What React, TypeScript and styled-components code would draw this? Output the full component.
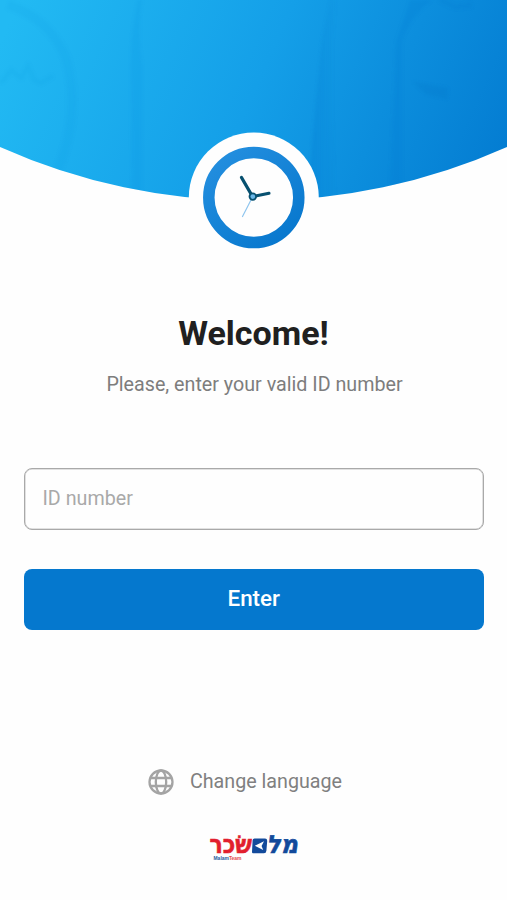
import React from "react";
import styled, { createGlobalStyle } from "styled-components";

const GlobalStyle = createGlobalStyle`
  * { box-sizing: border-box; }
  body { margin: 0; background: #fefefe; font-family: Roboto, "Liberation Sans", sans-serif; }
`;

const Screen = styled.main`
  width: 100%;
  height: 900px;
  display: flex;
  flex-direction: column;
  overflow: hidden;
  background: #fefefe;
`;

const Hero = styled.svg`
  display: block;
  width: 100%;
  height: 260px;
  flex: none;
`;

const Intro = styled.header`
  display: flex;
  flex-direction: column;
  align-items: center;
  padding-top: 53px;
`;

const Title = styled.h1`
  margin: 0;
  font-size: 34px;
  line-height: 40px;
  font-weight: 700;
  color: #202020;
`;

const Subtitle = styled.p`
  margin: 20px 0 0;
  padding-left: 2px;
  font-size: 19.7px;
  line-height: 24px;
  color: #7d7d7d;
`;

const Form = styled.form`
  display: flex;
  flex-direction: column;
  gap: 39px;
  padding: 70.5px 23px 0 23.5px;
`;

const Field = styled.input`
  height: 62px;
  border: 1px solid #a9a9a9;
  border-radius: 8px;
  padding: 0 18px 1px;
  background: #fefefe;
  box-shadow: inset 0 0 0 0.5px #c4c4c4;
  font: 400 19.7px Roboto, sans-serif;
  color: #333;
  outline: none;
  &::placeholder { color: #a9a9a9; opacity: 1; }
`;

const Submit = styled.button`
  height: 61px;
  border: 0;
  border-radius: 8px;
  padding: 0 0 2px;
  background: #0578ce;
  color: #fff;
  font: 500 22.4px Roboto, sans-serif;
`;

const Footer = styled.footer`
  display: flex;
  flex-direction: column;
  align-items: center;
  padding-top: 137.5px;
`;

const LanguageButton = styled.button`
  display: flex;
  align-items: center;
  gap: 16px;
  height: 28px;
  margin-right: 17px;
  padding: 0;
  border: 0;
  background: none;
  color: #808080;
  font: 400 19.7px Roboto, sans-serif;
`;

const GlobeIcon = styled.svg`
  width: 26px;
  height: 26px;
  margin-top: 1px;
`;

const Logo = styled.svg`
  width: 94px;
  height: 36px;
  margin-top: 32px;
  overflow: visible;
`;

function HeroArt() {
  return (
    <Hero viewBox="0 0 507 260">
      <defs>
        <linearGradient id="sky" gradientUnits="userSpaceOnUse" x1="10" y1="20" x2="470" y2="225">
          <stop offset="0" stopColor="#22baf3" />
          <stop offset="0.5" stopColor="#149fe8" />
          <stop offset="1" stopColor="#047dd2" />
        </linearGradient>
        <linearGradient id="ring" x1="0" y1="0" x2="0.8" y2="1">
          <stop offset="0" stopColor="#2590e0" />
          <stop offset="1" stopColor="#0878ce" />
        </linearGradient>
        <linearGradient id="band" x1="0" y1="0" x2="1" y2="0">
          <stop offset="0" stopColor="#0878d0" stopOpacity="0.3" />
          <stop offset="1" stopColor="#0878d0" stopOpacity="0" />
        </linearGradient>
        <clipPath id="dome">
          <path d="M0 0H507V147A622 622 0 0 1 0 147Z" />
        </clipPath>
        <filter id="soften"><feGaussianBlur stdDeviation="1.6" /></filter>
      </defs>
      <g clipPath="url(#dome)">
        <rect width="507" height="205" fill="url(#sky)" />
        <g filter="url(#soften)">
          <path d="M8 5Q49 18 66 58Q81 112 58 170" fill="none" stroke="#0a8bdc" strokeOpacity=".08" strokeWidth="9" />
          <path d="M138 0Q131 29 131 65L132 210H142V65Q137 29 142 0Z" fill="#078bdc" opacity=".12" />
          <path d="M330 0L322 40L313 133L308 205H336L333 120V40L337 0Z" fill="url(#band)" />
          <path d="M410 0L396 42L389 205H402V42Q409 18 432 0Z" fill="#0479d1" opacity=".2" />
          <path d="M1 83L11 70L21 78L28 66L34 80M32 79L41 83L53 76" fill="none" stroke="#0e91dc" strokeOpacity=".1" strokeWidth="4" />
          <path d="M413 82L448 88L447 99L426 94Z" fill="#0872ca" opacity=".2" />
          <path d="M440 0L455 7L472 5" stroke="#0872ca" strokeOpacity=".12" strokeWidth="5" fill="none" />
        </g>
      </g>
      <circle cx="253.8" cy="197.5" r="65" fill="#fefefe" />
      <circle cx="253.8" cy="197.5" r="45" fill="#fefefe" stroke="url(#ring)" strokeWidth="11.5" />
      <g fill="none" strokeLinecap="round">
        <path d="M241.5 177.5L252.5 196.5" stroke="#07506f" strokeWidth="3.3" />
        <path d="M253 196.6L269 193.2" stroke="#07506f" strokeWidth="3.1" />
        <path d="M251.5 199L242.5 216.5" stroke="#8fc5ee" strokeWidth="1.2" />
        <circle cx="252.8" cy="196.6" r="3.3" fill="#68b6e7" stroke="#07506f" strokeWidth="1.8" />
      </g>
    </Hero>
  );
}

function Globe() {
  return (
    <GlobeIcon viewBox="0 0 26 26" fill="none" stroke="#a4a4a4" strokeWidth="2.3">
      <circle cx="13" cy="13" r="11.5" />
      <ellipse cx="13" cy="13" rx="5.2" ry="11.5" />
      <path d="M2.5 9H23.5M2.5 17H23.5" />
    </GlobeIcon>
  );
}

const LogoWord = styled.text`
  font-family: "DejaVu Sans", "Liberation Sans", sans-serif;
  font-weight: 700;
  font-size: 25px;
  stroke-width: 0.6px;
`;

const LogoCaption = styled.text`
  font-family: "Liberation Sans", sans-serif;
  font-weight: 700;
  font-size: 4.8px;
`;

function BrandLogo() {
  return (
    <Logo viewBox="0 0 94 36" role="img" aria-label="מלם שכר">
      <LogoWord x="2.5" y="26" fill="#e21f2e" stroke="#e21f2e" textLength="42.5" lengthAdjust="spacingAndGlyphs">שׂכר</LogoWord>
      <LogoWord x="60.5" y="26" fill="#124a9b" stroke="#124a9b" textLength="31.5" lengthAdjust="spacingAndGlyphs" transform="translate(2.8 0) skewX(-8)">מל</LogoWord>
      <path d="M47.5 11.5H58Q60.4 11.5 60.2 14L59.4 23.8Q59.2 26.3 56.9 26.3H46Q45 26.3 45 25L45.6 13.5Q45.8 11.5 47.5 11.5Z" fill="#124a9b" />
      <path d="M47.8 18.7L57 14.3L54.6 19.1L56.2 23.1Z" fill="#fefefe" />
      <LogoCaption x="6.5" y="33.2" fill="#285b9d" textLength="28" lengthAdjust="spacingAndGlyphs">
        Malam<tspan fill="#e44b50">Team</tspan>
      </LogoCaption>
    </Logo>
  );
}

export default function App() {
  return (
    <>
      <GlobalStyle />
      <Screen>
        <HeroArt />
        <Intro>
          <Title>Welcome!</Title>
          <Subtitle>Please, enter your valid ID number</Subtitle>
        </Intro>
        <Form onSubmit={(event) => event.preventDefault()}>
          <Field placeholder="ID number" aria-label="ID number" />
          <Submit>Enter</Submit>
        </Form>
        <Footer>
          <LanguageButton type="button"><Globe />Change language</LanguageButton>
          <BrandLogo />
        </Footer>
      </Screen>
    </>
  );
}
